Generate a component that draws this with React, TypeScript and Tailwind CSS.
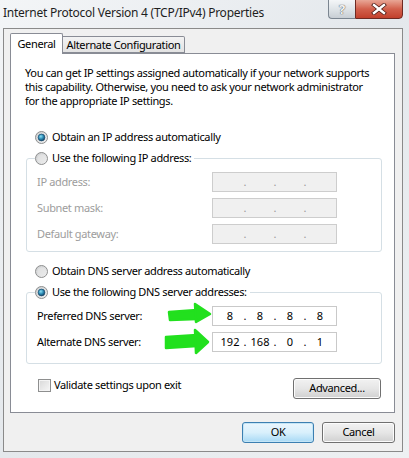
import React, { useId } from "react";

function Radio({ checked }: { checked?: boolean }) {
  const id = useId().replace(/:/g, "");
  return (
    <svg width="13" height="13" viewBox="0 0 13 13" className="shrink-0 block">
      <defs>
        <linearGradient id={`o${id}`} x1="0" y1="0" x2="1" y2="1">
          <stop offset="0" stopColor="#c9cbcd" />
          <stop offset="1" stopColor="#f4f4f4" />
        </linearGradient>
        <radialGradient id={`d${id}`} cx="0.4" cy="0.35" r="0.7">
          <stop offset="0" stopColor="#8fe0f4" />
          <stop offset="0.5" stopColor="#2f8fb8" />
          <stop offset="1" stopColor="#0f3a5c" />
        </radialGradient>
      </defs>
      <circle cx="6.5" cy="6.5" r="6" fill={`url(#o${id})`} stroke="#8e8f8f" strokeWidth="1" />
      <circle cx="6.5" cy="6.5" r="4" fill="#e8e8e8" opacity="0.6" />
      {checked && <circle cx="6.5" cy="6.5" r="3.4" fill={`url(#d${id})`} stroke="#1a4b6e" strokeWidth="0.7" />}
    </svg>
  );
}

function IpBox({ values, disabled }: { values?: string[]; disabled?: boolean }) {
  const v = values ?? ["", "", "", ""];
  return (
    <div
      className={`w-[125px] h-[20px] border flex items-center pl-[5px] tracking-normal ${
        disabled ? "bg-[#f0f0f0] border-[#cdcdcd] text-[#9a9a9a]" : "bg-white border-[#c9c9c9] text-black"
      }`}
    >
      {v.map((x, i) => (
        <React.Fragment key={i}>
          <span className="w-[24px] text-center leading-[18px]">{x}</span>
          {i < 3 && <span className="w-[6px] text-center leading-[18px]">.</span>}
        </React.Fragment>
      ))}
    </div>
  );
}

function Row({ label, disabled, values }: { label: string; disabled?: boolean; values?: string[] }) {
  return (
    <div className="flex items-center h-[20px]">
      <span className={`w-[177px] pl-[2px] ${disabled ? "text-[#9d9d9d]" : "text-black"}`}>{label}</span>
      <IpBox disabled={disabled} values={values} />
    </div>
  );
}

function WinButton({ children, focused, w }: { children: React.ReactNode; focused?: boolean; w: string }) {
  return (
    <div
      className={`${w} h-[21px] rounded-[3px] border flex items-center justify-center ${
        focused
          ? "border-[#3c7fb1] bg-gradient-to-b from-[#eaf6fd] via-[#d9f0fc] to-[#a7d9f5] shadow-[inset_0_0_0_1px_#c4e5f6]"
          : "border-[#707070] bg-gradient-to-b from-[#f2f2f2] via-[#e6e6e6] to-[#d0d0d0] shadow-[inset_0_0_0_1px_#fcfcfc]"
      }`}
    >
      {children}
    </div>
  );
}

export default function App() {
  return (
    <div className="w-[409px] h-[458px] relative overflow-hidden bg-gradient-to-br from-[#f3f5f7] via-[#e4e8ec] to-[#eef1f3] font-['Noto_Sans',sans-serif] text-[11px] tracking-[-0.35px] text-black">
      {/* title bar */}
      <div className="h-[28px] flex items-start">
        <span className="pl-[3px] pt-[5px] leading-[16px] text-[12px] tracking-[-0.25px] text-[#1e1e1e] whitespace-nowrap">
          Internet Protocol Version 4 (TCP/IPv4) Properties
        </span>
        <div className="ml-auto mr-[6px] flex -mt-[1px]">
          <div className="w-[27px] h-[20px] rounded-bl-[4px] border border-[#7b8590] border-r-0 bg-gradient-to-b from-[#f4f6f8] via-[#dfe4e8] to-[#c8ced4] flex items-center justify-center">
            <span className="text-[13px] leading-none text-[#f4f4f4] font-bold [text-shadow:0_0_1px_#555,0_0_1px_#555]">?</span>
          </div>
          <div className="w-[48px] h-[20px] rounded-br-[4px] border border-[#6e2a22] bg-gradient-to-b from-[#e8a696] via-[#d2604c] to-[#c2402c] flex items-center justify-center">
            <svg width="16" height="12" viewBox="0 0 16 12">
              <path d="M3 2 L13 10 M13 2 L3 10" stroke="#4a1a14" strokeWidth="4" strokeLinecap="square" />
              <path d="M3 2 L13 10 M13 2 L3 10" stroke="#ffffff" strokeWidth="2.4" strokeLinecap="square" />
            </svg>
          </div>
        </div>
      </div>

      {/* client area */}
      <div className="ml-[3px] w-[400px] h-[424px] border border-[#8a8a8a] bg-[#f0f0f0] flex flex-col">
        {/* tabs */}
        <div className="mt-[4px] ml-[6px] h-[21px] flex items-end relative z-10 -mb-[1px] whitespace-nowrap">
          <div className="w-[53px] h-[21px] border border-b-0 border-[#898c95] bg-white rounded-t-[2px] text-center leading-[20px]">
            General
          </div>
          <div className="w-[122px] h-[17px] border border-l-0 border-[#898c95] bg-gradient-to-b from-[#f3f3f3] to-[#e3e3e3] text-center leading-[16px] mb-[1px] rounded-tr-[2px]">
            Alternate Configuration
          </div>
        </div>

        {/* panel */}
        <div className="ml-[6px] w-[385px] h-[360px] border border-[#898c95] bg-white flex flex-col whitespace-nowrap">
          <p className="mt-[12px] pl-[14px] leading-[14px]">
            You can get IP settings assigned automatically if your network supports
            <br />
            this capability. Otherwise, you need to ask your network administrator
            <br />
            for the appropriate IP settings.
          </p>

          <div className="mt-[21px] ml-[24px] h-[16px] flex items-center gap-[4px]">
            <Radio checked />
            <span>Obtain an IP address automatically</span>
          </div>

          <fieldset className="mt-[5px] ml-[15px] w-[356px] border border-[#d5dfe5] rounded-[3px] px-[8px] pb-[7px]">
            <legend className="h-[16px] flex items-center gap-[4px] pr-[3px]">
              <Radio />
              <span>Use the following IP address:</span>
            </legend>
            <div className="mt-[6px] flex flex-col gap-[6px]">
              <Row label="IP address:" disabled />
              <Row label="Subnet mask:" disabled />
              <Row label="Default gateway:" disabled />
            </div>
          </fieldset>

          <div className="mt-[11px] ml-[24px] h-[16px] flex items-center gap-[4px]">
            <Radio />
            <span>Obtain DNS server address automatically</span>
          </div>

          <fieldset className="mt-[5px] ml-[15px] w-[356px] border border-[#d5dfe5] rounded-[3px] px-[8px] pb-[11px]">
            <legend className="h-[16px] flex items-center gap-[4px] pr-[3px]">
              <Radio checked />
              <span>Use the following DNS server addresses:</span>
            </legend>
            <div className="mt-[6px] flex flex-col gap-[6px]">
              <Row label="Preferred DNS server:" values={["8", "8", "8", "8"]} />
              <Row label="Alternate DNS server:" values={["192", "168", "0", "1"]} />
            </div>
          </fieldset>

          <div className="mt-[14px] pl-[27px] pr-[13px] flex items-start">
            <div className="flex items-center gap-[3px] h-[13px] mt-[1px]">
              <div className="w-[13px] h-[13px] border border-[#8e8f8f] bg-gradient-to-br from-[#d8d8d8] to-[#f7f7f7] shadow-[inset_0_0_0_1px_#f4f4f4]" />
              <span>Validate settings upon exit</span>
            </div>
            <div className="ml-auto">
              <WinButton w="w-[88px]">Advanced...</WinButton>
            </div>
          </div>
        </div>

        {/* bottom buttons */}
        <div className="mt-[9px] mr-[7px] flex justify-end gap-[8px]">
          <WinButton w="w-[72px]" focused>
            OK
          </WinButton>
          <WinButton w="w-[73px]">Cancel</WinButton>
        </div>
      </div>

      {/* green annotation arrows */}
      <svg className="absolute left-0 top-0 pointer-events-none" width="409" height="458" viewBox="0 0 409 458">
        <g fill="#22e01e" stroke="#22e01e" strokeWidth="2.5" strokeLinejoin="round">
          <polygon points="169,312 197,310 197,319 170,320" />
          <polygon points="195,304 210,314 196,322" />
          <polygon points="166,337 197,335 197,346 166,348" />
          <polygon points="195,330 208,342 196,353" />
        </g>
      </svg>
    </div>
  );
}
